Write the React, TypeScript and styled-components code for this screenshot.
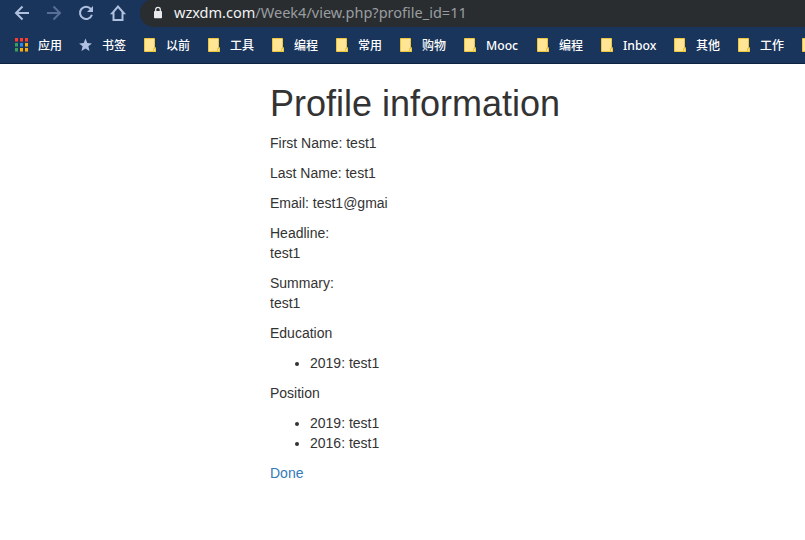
import React from "react";
import styled, { createGlobalStyle } from "styled-components";

const GlobalStyle = createGlobalStyle`
  * { box-sizing: border-box; }
  body {
    margin: 0;
    overflow: hidden;
    background: #fff;
    color: #333;
    font: 14px/20px "Liberation Sans", Arial, sans-serif;
  }
`;

const Browser = styled.div`
  width: 805px;
  height: 540px;
  overflow: hidden;
`;

const Toolbar = styled.header`
  display: flex;
  height: 27px;
  background: #1a355b;
`;

const NavButtons = styled.nav`
  display: flex;
  flex: none;
  width: 140px;
  height: 26px;
  padding-left: 12px;
  gap: 12px;
  align-items: center;
`;

const NavIcon = styled.svg<{ $dim?: boolean }>`
  flex: none;
  width: 20px;
  height: 20px;
  fill: none;
  stroke: ${(p) => (p.$dim ? "#566f94" : "#b0c1df")};
  stroke-width: 2;
`;

const AddressBar = styled.div`
  display: flex;
  flex: 1;
  height: 28px;
  margin-top: -1px;
  padding-left: 13px;
  border-radius: 14px 0 0 14px;
  background: #292d30;
`;

const Lock = styled.svg`
  width: 10px;
  height: 14px;
  margin-top: 7px;
  flex: none;
`;

const Url = styled.span`
  margin-left: 11px;
  color: #999da0;
  font: 14.53px/26px "Noto Sans", "Open Sans", sans-serif;
  white-space: nowrap;
`;

const Host = styled.span`
  color: #f1f2f3;
`;

const BookmarkBar = styled.nav`
  display: flex;
  align-items: center;
  height: 37px;
  padding-left: 15px;
  gap: 18px;
  overflow: hidden;
  background: #1a355b;
  border-bottom: 1px solid #0e2342;
`;

const Bookmark = styled.div`
  display: flex;
  flex: none;
  align-items: center;
  gap: 10px;
`;

const BookmarkIcon = styled.svg`
  flex: none;
  width: 13px;
  height: 14px;
`;

const FolderDrawing = styled(BookmarkIcon)`
  width: 12px;
  margin-left: 1px;
`;

const BookmarkLabel = styled.span<{ $wide?: boolean }>`
  width: ${(p) => (p.$wide ? 32 : 23)}px;
  padding-top: 2px;
  color: #fff;
  font: 500 ${(p) => (p.$wide ? 12.2 : 12)}px/18px "Noto Sans", "Noto Sans CJK SC", sans-serif;
  white-space: nowrap;
`;

const Container = styled.main`
  padding: 20px 0 0 270px;
`;

const Title = styled.h1`
  margin: 0 0 10px;
  font-size: 36px;
  font-weight: 400;
  line-height: 39px;
`;

const Paragraph = styled.p`
  margin: 0 0 10px;
`;

const List = styled.ul`
  margin: 0 0 10px;
  padding-left: 40px;
`;

const DoneLink = styled.a`
  color: #337ab7;
  text-decoration: none;
`;

const appColors = ["#ff3b30", "#ff3b30", "#ff3b30", "#34a05a", "#2f86f5", "#fbac08", "#34a05a", "#fbac08", "#fbac08"];

function AppsIcon() {
  return (
    <BookmarkIcon viewBox="0 0 13 14" shapeRendering="crispEdges">
      {appColors.map((color, i) => (
        <g key={i}>
          <rect x={(i % 3) * 5} y={Math.floor(i / 3) * 5} width="3" height="3" fill={color} />
          <rect x={(i % 3) * 5} y={Math.floor(i / 3) * 5 + 3} width="3" height="1" fill={color} opacity=".55" />
        </g>
      ))}
    </BookmarkIcon>
  );
}

function StarIcon() {
  return (
    <BookmarkIcon viewBox="0 0 13 14">
      <path d="M6.5 .6 8.3 5 12.9 5.4 9.4 8.3 10.5 12.9 6.5 10.4 2.5 12.9 3.6 8.3 .1 5.4 4.7 5Z" fill="#afc1e3" />
    </BookmarkIcon>
  );
}

function FolderIcon() {
  return (
    <FolderDrawing viewBox="0 0 12 14">
      <path d="M.5 .5h10v9.2h1v3.8H.5Z" fill="#ffe594" stroke="#edc53f" />
      <path d="M9.5 13.5v-3h2v3Z" fill="#ffe594" stroke="#edc53f" />
    </FolderDrawing>
  );
}

const folders = ["以前", "工具", "编程", "常用", "购物", "Mooc", "编程", "Inbox", "其他", "工作", ""];

function BrowserChrome() {
  return (
    <>
      <Toolbar>
        <NavButtons>
          <NavIcon viewBox="0 0 20 20"><path d="M17 10H4M10.5 3.5 4 10l6.5 6.5" /></NavIcon>
          <NavIcon viewBox="0 0 20 20" $dim><path d="M3 10h13M9.5 3.5 16 10l-6.5 6.5" /></NavIcon>
          <NavIcon viewBox="0 0 20 20">
            <path d="M14.8 6A6.1 6.1 0 1 0 15.9 11.8" />
            <path d="M17 3v6h-6Z" fill="#b0c1df" stroke="none" />
          </NavIcon>
          <NavIcon viewBox="0 0 20 20"><path d="M4.1 10.3 10 3.5l5.9 6.8h-1.4V17h-9v-6.7Z" /></NavIcon>
        </NavButtons>
        <AddressBar>
          <Lock viewBox="0 0 10 14">
            <path d="M2.7 6V3.6a2.3 2.3 0 0 1 4.6 0V6" fill="none" stroke="#e9eaed" strokeWidth="1.3" />
            <rect x="1" y="5" width="8" height="7.3" rx=".8" fill="#e9eaed" />
          </Lock>
          <Url><Host>wzxdm.com</Host>/Week4/view.php?profile_id=11</Url>
        </AddressBar>
      </Toolbar>
      <BookmarkBar>
        <Bookmark><AppsIcon /><BookmarkLabel>应用</BookmarkLabel></Bookmark>
        <Bookmark><StarIcon /><BookmarkLabel>书签</BookmarkLabel></Bookmark>
        {folders.map((name, i) => (
          <Bookmark key={i}>
            <FolderIcon />
            <BookmarkLabel $wide={name.length > 2}>{name}</BookmarkLabel>
          </Bookmark>
        ))}
      </BookmarkBar>
    </>
  );
}

export default function App() {
  return (
    <Browser>
      <GlobalStyle />
      <BrowserChrome />
      <Container>
        <Title>Profile information</Title>
        <Paragraph>First Name: test1</Paragraph>
        <Paragraph>Last Name: test1</Paragraph>
        <Paragraph>Email: test1@gmai</Paragraph>
        <Paragraph>Headline:<br />test1</Paragraph>
        <Paragraph>Summary:<br />test1</Paragraph>
        <Paragraph>Education</Paragraph>
        <List><li>2019: test1</li></List>
        <Paragraph>Position</Paragraph>
        <List><li>2019: test1</li><li>2016: test1</li></List>
        <DoneLink href="#">Done</DoneLink>
      </Container>
    </Browser>
  );
}
